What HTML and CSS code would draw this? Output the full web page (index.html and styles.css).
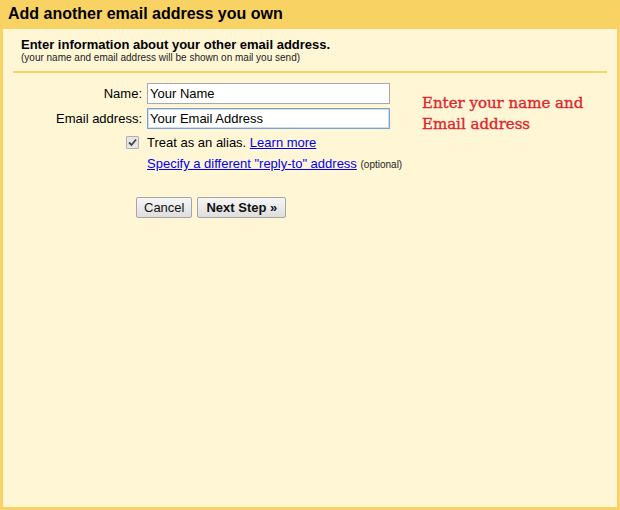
FILE: index.html
```html
<!DOCTYPE html>
<html>
<head>
<meta charset="utf-8">
<link rel="stylesheet" href="styles.css">
</head>
<body>
<div class="frame">
  <div class="header">Add another email address you own</div>
  <div class="content">
    <div class="intro">
      <div class="intro-title">Enter information about your other email address.</div>
      <div class="intro-sub">(your name and email address will be shown on mail you send)</div>
    </div>
    <div class="sep"></div>
    <div class="form">
      <div class="label">Name:</div>
      <div class="field"><input class="input" type="text" value="Your Name"></div>
      <div class="note">Enter your name and<br>Email address</div>
      <div class="label">Email address:</div>
      <div class="field"><input class="input input-focus" type="text" value="Your Email Address"></div>
      <div class="label check-cell"><span class="checkbox"><svg width="9" height="9" viewBox="0 0 9 9"><path d="M1 4.5 L3.5 7 L8 1.5" fill="none" stroke="#444" stroke-width="1.8"/></svg></span></div>
      <div class="text-row alias-row">Treat as an alias. <a href="#" class="link">Learn more</a></div>
      <div class="label"></div>
      <div class="text-row"><a href="#" class="link">Specify a different "reply-to" address</a> <span class="optional">(optional)</span></div>
    </div>
    <div class="buttons">
      <button class="btn">Cancel</button>
      <button class="btn btn-bold">Next Step »</button>
    </div>
  </div>
</div>
</body>
</html>
```
FILE: styles.css
```css
html, body {
  margin: 0;
  padding: 0;
}
body {
  font-family: Arial, "Liberation Sans", sans-serif;
  font-size: 13px;
  color: #000;
}
.frame {
  width: 620px;
  height: 510px;
  box-sizing: border-box;
  border: 3px solid #f9d264;
  border-top: 0;
  background: #fff6d6;
  display: flex;
  flex-direction: column;
}
.header {
  background: #f9d264;
  padding: 5px 5px 6px;
  font-size: 16px;
  font-weight: bold;
  line-height: 18px;
  color: #000;
}
.content {
  padding: 0 10px;
}
.intro {
  padding: 8px 8px 0;
}
.intro-title {
  font-weight: bold;
  font-size: 13px;
  line-height: 15px;
}
.intro-sub {
  font-size: 10px;
  line-height: 12px;
  color: #222;
}
.sep {
  height: 2px;
  background: #f9d264;
  margin-top: 7px;
}
.form {
  display: grid;
  grid-template-columns: 129px 243px 1fr;
  column-gap: 5px;
  row-gap: 4px;
  margin-top: 10px;
  align-items: center;
}
.label {
  text-align: right;
  line-height: 16px;
}
.field {
  display: flex;
  align-items: center;
}
.input {
  width: 243px;
  height: 21px;
  box-sizing: border-box;
  border: 1px solid #a9a9a9;
  padding: 1px 2px;
  font-family: Arial, "Liberation Sans", sans-serif;
  font-size: 13px;
  color: #000;
  background: #fff;
  margin: 0;
  outline: none;
}
.input-focus {
  border-color: #7aa0d4;
  box-shadow: 0 0 0 1px #cfdcf0 inset;
}
.note {
  grid-column: 3;
  grid-row: 1 / span 3;
  align-self: start;
  margin: 10px 0 0 27px;
  font-family: "DejaVu Serif", serif;
  font-size: 15px;
  line-height: 21px;
  color: #e0252e;
  -webkit-text-stroke: 0.35px #e0252e;
}
.check-cell {
  display: flex;
  justify-content: flex-end;
  align-items: center;
  padding-top: 1px;
}
.checkbox {
  width: 11px;
  height: 11px;
  border: 1px solid #b0b0b0;
  background: #e6e6e6;
  border-radius: 1px;
  display: flex;
  align-items: center;
  justify-content: center;
  margin-right: 3px;
}
.text-row {
  line-height: 17px;
  white-space: nowrap;
}
.alias-row {
  padding-top: 1px;
}
.link {
  color: #0000ee;
  text-decoration: underline;
}
.optional {
  font-size: 10px;
  color: #222;
}
.buttons {
  display: flex;
  gap: 5px;
  padding-left: 123px;
  margin-top: 24px;
}
.btn {
  height: 21px;
  box-sizing: border-box;
  border: 1px solid #a6a6a6;
  border-radius: 2px;
  background: linear-gradient(#f6f6f6, #dedede);
  font-family: Arial, "Liberation Sans", sans-serif;
  font-size: 13px;
  color: #111;
  padding: 0 7px;
  margin: 0;
}
.btn-bold {
  font-weight: bold;
  padding: 0 8px;
}
```
